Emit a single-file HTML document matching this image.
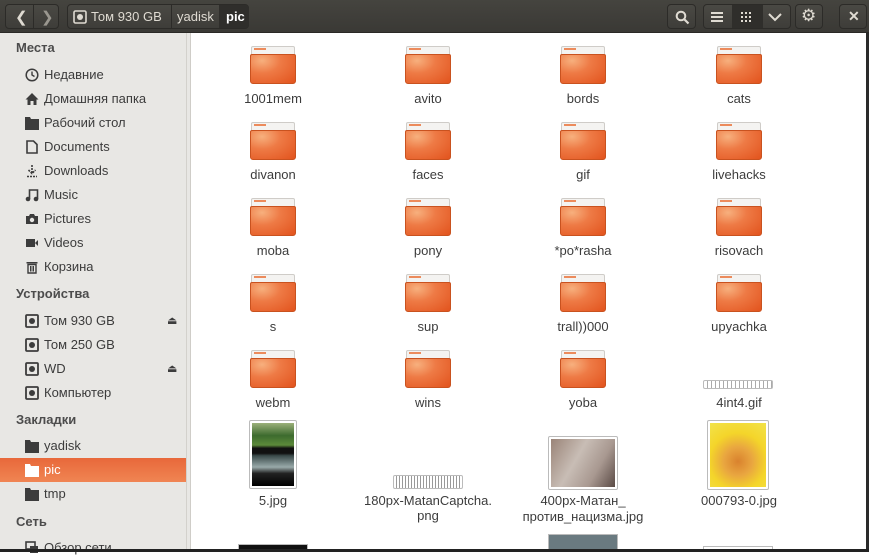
<!DOCTYPE html>
<html><head><meta charset="utf-8"><style>
*{margin:0;padding:0;box-sizing:border-box}
body{width:869px;height:552px;overflow:hidden;background:#fff;font-family:"Liberation Sans",sans-serif;font-size:13px;color:#3c3c3c;position:relative}
.hdr{position:absolute;left:0;top:0;width:869px;height:33px;background:linear-gradient(#45443f,#3a3935);border-bottom:1px solid #2a2926}
.btn{position:absolute;top:4px;height:25px;border:1px solid #2c2b28;border-radius:4px;background:linear-gradient(#4a4944,#3e3d39);color:#dfdbd2}
.side{position:absolute;left:0;top:33px;width:187px;height:519px;background:#e8e7e4;border-right:1px solid #d3d1cc}
.sb{position:absolute;left:187px;top:33px;width:4px;height:519px;background:#e8e7e4;border-right:1px solid #cfcdc8}
.h{position:absolute;left:16px;font-weight:bold;color:#4c4c4c;font-size:13px}
.it{position:absolute;left:0;width:186px;height:24px;line-height:24px;padding-left:44px;color:#3c3c3c}
.ic{position:absolute;left:25px;top:5px;width:14px;height:14px}
.sel{background:linear-gradient(#e8683a,#f08553);color:#fff}
.f{position:absolute;width:46px;height:38px}
.f .bk{position:absolute;left:1px;top:0;width:44px;height:12px;background:#f4f3f1;border:1px solid #cfccc8;border-radius:2px 2px 0 0}
.f .tb{position:absolute;left:4px;top:2px;width:12px;height:2px;background:#ec8b5c}
.f .bd{position:absolute;left:0;top:8px;width:46px;height:30px;border-radius:2px 2px 3px 3px;background:radial-gradient(ellipse at 25% 20%,#f7b07e 0%,#ee7a45 40%,#e2531d 100%);border:1px solid #c9521f}
.l{position:absolute;width:150px;text-align:center;color:#3c3c3c}
.edge{position:absolute;left:0;top:549px;width:869px;height:3px;background:#222}
.redge{position:absolute;left:866px;top:33px;width:3px;height:519px;background:#2a2a2a}
</style></head><body>
<div class="hdr">
 <div class="btn" style="left:5px;width:54px"><span style="position:absolute;left:9px;top:3px;font-size:15px">&#10094;</span><span style="position:absolute;left:27px;top:0;width:1px;height:23px;background:#2c2b28"></span><span style="position:absolute;left:35px;top:3px;font-size:15px;color:#9a978f">&#10095;</span></div>
 <div class="btn" style="left:67px;width:182px">
  <svg style="position:absolute;left:5px;top:5px" width="14" height="14"><rect x="1" y="1" width="12" height="12" rx="1.5" fill="none" stroke="#dfdbd2" stroke-width="1.6"/><circle cx="7" cy="7" r="3" fill="#dfdbd2"/></svg>
  <span style="position:absolute;left:23px;top:4px;font-size:13px">Том 930 GB</span>
  <span style="position:absolute;left:103px;top:0;width:1px;height:23px;background:#2c2b28"></span>
  <span style="position:absolute;left:109px;top:4px">yadisk</span>
  <span style="position:absolute;left:151px;top:0;width:30px;height:23px;background:#2f2e2b;border-radius:0 3px 3px 0"></span>
  <span style="position:absolute;left:158px;top:4px;font-weight:bold;color:#fff">pic</span>
 </div>
 <div class="btn" style="left:667px;width:29px"><svg style="position:absolute;left:7px;top:5px" width="15" height="15"><circle cx="6" cy="6" r="4.3" fill="none" stroke="#dfdbd2" stroke-width="2"/><line x1="9" y1="9" x2="13.5" y2="13.5" stroke="#dfdbd2" stroke-width="2.2"/></svg></div>
 <div class="btn" style="left:703px;width:88px">
  <svg style="position:absolute;left:7px;top:6px" width="14" height="12"><rect y="1" width="12" height="2" fill="#dfdbd2"/><rect y="5" width="12" height="2" fill="#dfdbd2"/><rect y="9" width="12" height="2" fill="#dfdbd2"/></svg>
  <span style="position:absolute;left:28px;top:0;width:31px;height:23px;background:#2f2e2b"></span>
  <svg style="position:absolute;left:37px;top:7px" width="12" height="12" fill="#dfdbd2"><rect x="0" y="0" width="2" height="2"/><rect x="4" y="0" width="2" height="2"/><rect x="8" y="0" width="2" height="2"/><rect x="0" y="4" width="2" height="2"/><rect x="4" y="4" width="2" height="2"/><rect x="8" y="4" width="2" height="2"/><rect x="0" y="8" width="2" height="2"/><rect x="4" y="8" width="2" height="2"/><rect x="8" y="8" width="2" height="2"/></svg>
  <svg style="position:absolute;left:64px;top:7px" width="14" height="10"><polyline points="1,2 7,8 13,2" fill="none" stroke="#dfdbd2" stroke-width="2"/></svg>
 </div>
 <div class="btn" style="left:795px;width:28px"><span style="position:absolute;left:5px;top:1px;font-size:17px">&#9881;</span></div>
 <div class="btn" style="left:839px;width:28px"><span style="position:absolute;left:8px;top:3px;font-size:14px;font-weight:bold">&#10005;</span></div>
</div>
<div class="side">
 <div class="h" style="top:7px">Места</div>
 <div class="it" style="top:30px"><svg class="ic" viewBox="0 0 14 14"><circle cx="7" cy="7" r="5.8" fill="none" stroke="#3c3c3c" stroke-width="1.5"/><polyline points="7,3.5 7,7 9.5,8.5" fill="none" stroke="#3c3c3c" stroke-width="1.4"/></svg>Недавние</div>
 <div class="it" style="top:54px"><svg class="ic" viewBox="0 0 14 14"><path d="M7 1L0.5 7.5H2.5V13H11.5V7.5H13.5Z" fill="#3c3c3c"/><rect x="5.5" y="9" width="3" height="4" fill="#e8e7e4"/></svg>Домашняя папка</div>
 <div class="it" style="top:78px"><svg class="ic" viewBox="0 0 14 14"><path d="M0 1H5L6 3H14V14H0Z" fill="#3c3c3c"/></svg>Рабочий стол</div>
 <div class="it" style="top:102px"><svg class="ic" viewBox="0 0 14 14"><path d="M2 1H8.5L12 4.5V13H2Z" fill="none" stroke="#3c3c3c" stroke-width="1.6"/></svg>Documents</div>
 <div class="it" style="top:126px"><svg class="ic" viewBox="0 0 14 14"><path d="M7 1V9M3.5 6L7 9.5L10.5 6M2 12.5H12" fill="none" stroke="#3c3c3c" stroke-width="1.6" stroke-dasharray="2 1"/></svg>Downloads</div>
 <div class="it" style="top:150px"><svg class="ic" viewBox="0 0 14 14"><path d="M4.5 11V2H12.5V11" fill="none" stroke="#3c3c3c" stroke-width="1.6"/><circle cx="3" cy="11" r="2.3" fill="#3c3c3c"/><circle cx="11" cy="11" r="2.3" fill="#3c3c3c"/></svg>Music</div>
 <div class="it" style="top:174px"><svg class="ic" viewBox="0 0 14 14"><path d="M1 4H4L5 2H9L10 4H13V12H1Z" fill="#3c3c3c"/><circle cx="7" cy="8" r="2.2" fill="#e8e7e4"/></svg>Pictures</div>
 <div class="it" style="top:198px"><svg class="ic" viewBox="0 0 14 14"><rect x="1" y="3" width="9" height="8" fill="#3c3c3c"/><path d="M10 7L13 4V10Z" fill="#3c3c3c"/></svg>Videos</div>
 <div class="it" style="top:222px"><svg class="ic" viewBox="0 0 14 14"><rect x="1.5" y="2" width="11" height="1.5" fill="#3c3c3c"/><path d="M3 4.5H11V13H3Z" fill="none" stroke="#3c3c3c" stroke-width="1.4"/><path d="M5.5 6V11.5M7 6V11.5M8.5 6V11.5" stroke="#3c3c3c"/></svg>Корзина</div>
 <div class="h" style="top:253px">Устройства</div>
 <div class="it" style="top:276px"><svg class="ic" viewBox="0 0 14 14"><rect x="1" y="1" width="12" height="12" rx="1" fill="none" stroke="#3c3c3c" stroke-width="1.8"/><circle cx="7" cy="7" r="3" fill="#3c3c3c"/></svg>Том 930 GB<span style="position:absolute;left:167px;top:0;font-size:11px">&#9167;</span></div>
 <div class="it" style="top:300px"><svg class="ic" viewBox="0 0 14 14"><rect x="1" y="1" width="12" height="12" rx="1" fill="none" stroke="#3c3c3c" stroke-width="1.8"/><circle cx="7" cy="7" r="3" fill="#3c3c3c"/></svg>Том 250 GB</div>
 <div class="it" style="top:324px"><svg class="ic" viewBox="0 0 14 14"><rect x="1" y="1" width="12" height="12" rx="1" fill="none" stroke="#3c3c3c" stroke-width="1.8"/><circle cx="7" cy="7" r="3" fill="#3c3c3c"/></svg>WD<span style="position:absolute;left:167px;top:0;font-size:11px">&#9167;</span></div>
 <div class="it" style="top:348px"><svg class="ic" viewBox="0 0 14 14"><rect x="1" y="1" width="12" height="12" rx="1" fill="none" stroke="#3c3c3c" stroke-width="1.8"/><circle cx="7" cy="7" r="3" fill="#3c3c3c"/></svg>Компьютер</div>
 <div class="h" style="top:379px">Закладки</div>
 <div class="it" style="top:401px"><svg class="ic" viewBox="0 0 14 14"><path d="M0 1H5L6 3H14V14H0Z" fill="#3c3c3c"/></svg>yadisk</div>
 <div class="it sel" style="top:425px"><svg class="ic" viewBox="0 0 14 14"><path d="M0 1H5L6 3H14V14H0Z" fill="#fff"/></svg>pic</div>
 <div class="it" style="top:449px"><svg class="ic" viewBox="0 0 14 14"><path d="M0 1H5L6 3H14V14H0Z" fill="#3c3c3c"/></svg>tmp</div>
 <div class="h" style="top:481px">Сеть</div>
 <div class="it" style="top:503px"><svg class="ic" viewBox="0 0 14 14"><rect x="1" y="1" width="9" height="7" fill="none" stroke="#3c3c3c" stroke-width="1.6"/><rect x="5" y="5" width="8" height="7" fill="#3c3c3c"/></svg>Обзор сети</div>
</div>
<div class="sb"></div>

<div id="grid"></div>
<script>
var cols=[273,428,583,739];
var names=["1001mem","avito","bords","cats","divanon","faces","gif","livehacks","moba","pony","*po*rasha","risovach","s","sup","trall))000","upyachka","webm","wins","yoba"];
var h="";
names.forEach(function(n,i){var c=cols[i%4],r=Math.floor(i/4);var top=46+r*76;
h+='<div class="f" style="left:'+(c-23)+'px;top:'+top+'px"><div class="bk"></div><div class="tb"></div><div class="bd"></div></div>';
h+='<div class="l" style="left:'+(c-75)+'px;top:'+(top+45)+'px">'+n+'</div>';});
document.getElementById("grid").innerHTML=h;
</script>
<div style="position:absolute;left:703px;top:380px;width:70px;height:9px;border:1px solid #bbb;border-radius:2px;background:repeating-linear-gradient(90deg,#fff 0 3px,#aaa 3px 4px)"></div>
<div class="l" style="left:664px;top:395px">4int4.gif</div>
<div style="position:absolute;left:249px;top:420px;width:48px;height:69px;border:1px solid #bbb;border-radius:2px;padding:2px;background:#fff"><div style="width:42px;height:63px;background:linear-gradient(#9bb07a 0,#3d6b2e 20%,#5c8a3a 35%,#111 40%,#111 48%,#3a4a4a 52%,#9aa 70%,#222 80%,#000 100%)"></div></div>
<div class="l" style="left:198px;top:493px">5.jpg</div>
<div style="position:absolute;left:393px;top:475px;width:70px;height:14px;border:1px solid #bbb;border-radius:2px;background:repeating-linear-gradient(90deg,#fff 0 2px,#999 2px 3px)"></div>
<div class="l" style="left:353px;top:493px">180px-MatanCaptcha.<br>png</div>
<div style="position:absolute;left:548px;top:436px;width:70px;height:54px;border:1px solid #bbb;border-radius:2px;padding:2px;background:#fff"><div style="width:64px;height:48px;background:linear-gradient(120deg,#9a8478,#c8bdb5 40%,#a89890 70%,#5a4a45)"></div></div>
<div class="l" style="left:508px;top:493px;line-height:16px">400px-Матан_<br>против_нацизма.jpg</div>
<div style="position:absolute;left:707px;top:420px;width:62px;height:70px;border:1px solid #bbb;border-radius:2px;padding:2px;background:#fff"><div style="width:56px;height:64px;background:radial-gradient(circle at 50% 60%,#d9822e 0,#e9a640 30%,#f4d52a 60%,#f2e34a 100%)"></div></div>
<div class="l" style="left:664px;top:493px">000793-0.jpg</div>
<div style="position:absolute;left:238px;top:544px;width:70px;height:6px;background:#111;border:1px solid #bbb"></div>
<div style="position:absolute;left:548px;top:534px;width:70px;height:16px;border:1px solid #bbb;background:#6a7a80"></div>
<div style="position:absolute;left:703px;top:546px;width:70px;height:4px;border:1px solid #bbb"></div>
<div class="redge"></div>
<div class="edge"></div>
</body></html>
